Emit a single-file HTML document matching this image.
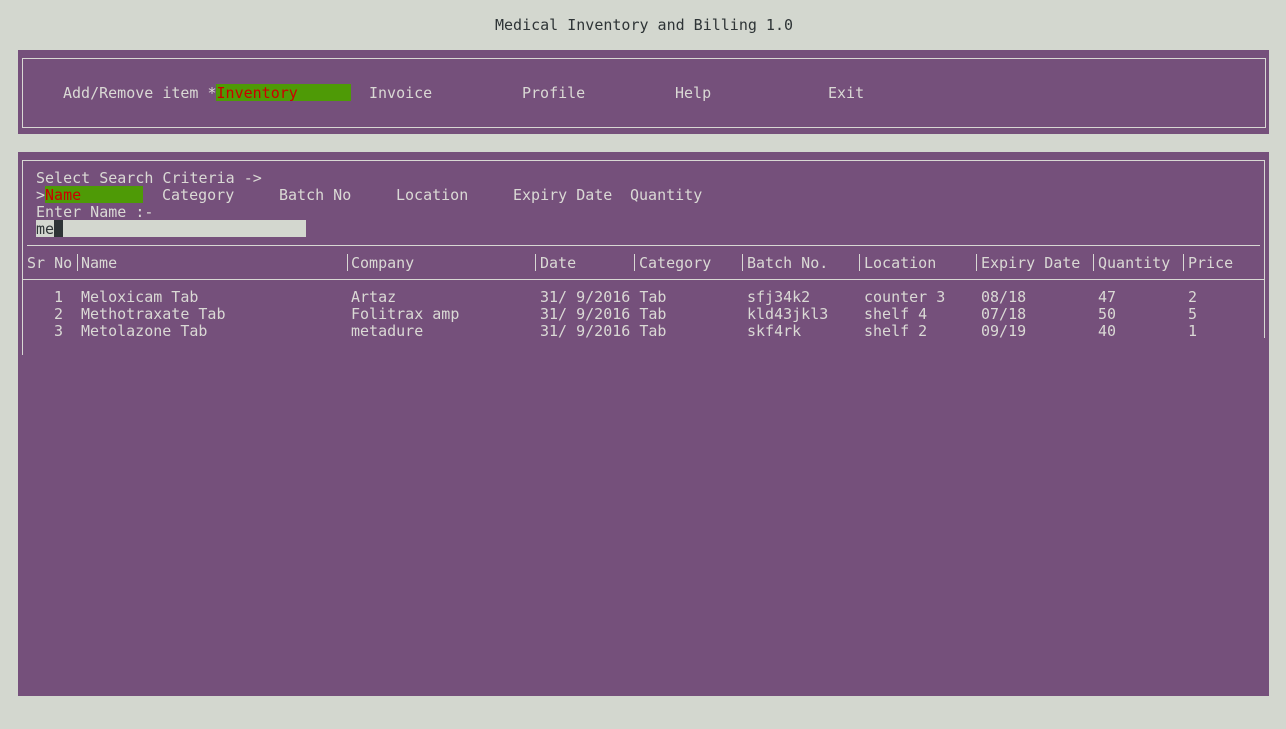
<!DOCTYPE html>
<html><head><meta charset="utf-8"><style>
body{margin:0;width:1286px;height:729px;background:#d3d7cf;position:relative;overflow:hidden;font-family:"DejaVu Sans Mono","Liberation Mono",monospace;font-size:15px;color:#dad9d5}
div,span{position:absolute}
.t{white-space:pre;line-height:17px;height:17px;margin-top:1px}
.box{background:#75507b}
.vl{background:#d8d8d4;width:1px}
.hz{background:#d8d8d4;height:1px}
</style></head><body>
<div class="t" style="left:495px;top:16px;color:#2e3436">Medical Inventory and Billing 1.0</div>

<div class="box" style="left:18px;top:50px;width:1251px;height:84px"></div>
<div style="left:22px;top:58px;width:1242px;height:68px;border:1px solid #d8d8d4"></div>
<div style="left:216px;top:84px;width:135px;height:17px;background:#4e9a06"></div>
<div class="t" style="left:63px;top:84px">Add/Remove item *<span style="position:static;color:#cc0000">Inventory</span></div>
<div class="t" style="left:369px;top:84px">Invoice</div>
<div class="t" style="left:522px;top:84px">Profile</div>
<div class="t" style="left:675px;top:84px">Help</div>
<div class="t" style="left:828px;top:84px">Exit</div>

<div class="box" style="left:18px;top:152px;width:1251px;height:544px"></div>
<div class="hz" style="left:22px;top:160px;width:1243px"></div>
<div class="vl" style="left:22px;top:160px;height:195px"></div>
<div class="vl" style="left:1264px;top:160px;height:178px"></div>
<div class="t" style="left:36px;top:169px">Select Search Criteria -&gt;</div>
<div style="left:45px;top:186px;width:98px;height:17px;background:#4e9a06"></div>
<div class="t" style="left:36px;top:186px">&gt;<span style="position:static;color:#cc0000">Name</span></div>
<div class="t" style="left:162px;top:186px">Category</div>
<div class="t" style="left:279px;top:186px">Batch No</div>
<div class="t" style="left:396px;top:186px">Location</div>
<div class="t" style="left:513px;top:186px">Expiry Date</div>
<div class="t" style="left:630px;top:186px">Quantity</div>
<div class="t" style="left:36px;top:203px">Enter Name :-</div>
<div style="left:36px;top:220px;width:270px;height:17px;background:#d3d7cf"></div>
<div style="left:54px;top:220px;width:9px;height:17px;background:#2e3436"></div>
<div class="t" style="left:36px;top:220px;color:#2e3436">me</div>
<div class="hz" style="left:27px;top:245px;width:1233px"></div>
<div class="hz" style="left:22px;top:279px;width:1243px"></div>

<div class="vl" style="left:77px;top:254px;height:17px"></div>
<div class="vl" style="left:347px;top:254px;height:17px"></div>
<div class="vl" style="left:535px;top:254px;height:17px"></div>
<div class="vl" style="left:634px;top:254px;height:17px"></div>
<div class="vl" style="left:742px;top:254px;height:17px"></div>
<div class="vl" style="left:859px;top:254px;height:17px"></div>
<div class="vl" style="left:976px;top:254px;height:17px"></div>
<div class="vl" style="left:1093px;top:254px;height:17px"></div>
<div class="vl" style="left:1183px;top:254px;height:17px"></div>
<div class="t" style="left:27px;top:254px">Sr No</div>
<div class="t" style="left:81px;top:254px">Name</div>
<div class="t" style="left:351px;top:254px">Company</div>
<div class="t" style="left:540px;top:254px">Date</div>
<div class="t" style="left:639px;top:254px">Category</div>
<div class="t" style="left:747px;top:254px">Batch No.</div>
<div class="t" style="left:864px;top:254px">Location</div>
<div class="t" style="left:981px;top:254px">Expiry Date</div>
<div class="t" style="left:1098px;top:254px">Quantity</div>
<div class="t" style="left:1188px;top:254px">Price</div>

<div class="t" style="left:54px;top:288px;height:51px">1
2
3</div>
<div class="t" style="left:81px;top:288px;height:51px">Meloxicam Tab
Methotraxate Tab
Metolazone Tab</div>
<div class="t" style="left:351px;top:288px;height:51px">Artaz
Folitrax amp
metadure</div>
<div class="t" style="left:540px;top:288px;height:51px">31/ 9/2016 Tab
31/ 9/2016 Tab
31/ 9/2016 Tab</div>
<div class="t" style="left:747px;top:288px;height:51px">sfj34k2
kld43jkl3
skf4rk</div>
<div class="t" style="left:864px;top:288px;height:51px">counter 3
shelf 4
shelf 2</div>
<div class="t" style="left:981px;top:288px;height:51px">08/18
07/18
09/19</div>
<div class="t" style="left:1098px;top:288px;height:51px">47
50
40</div>
<div class="t" style="left:1188px;top:288px;height:51px">2
5
1</div>
</body></html>
